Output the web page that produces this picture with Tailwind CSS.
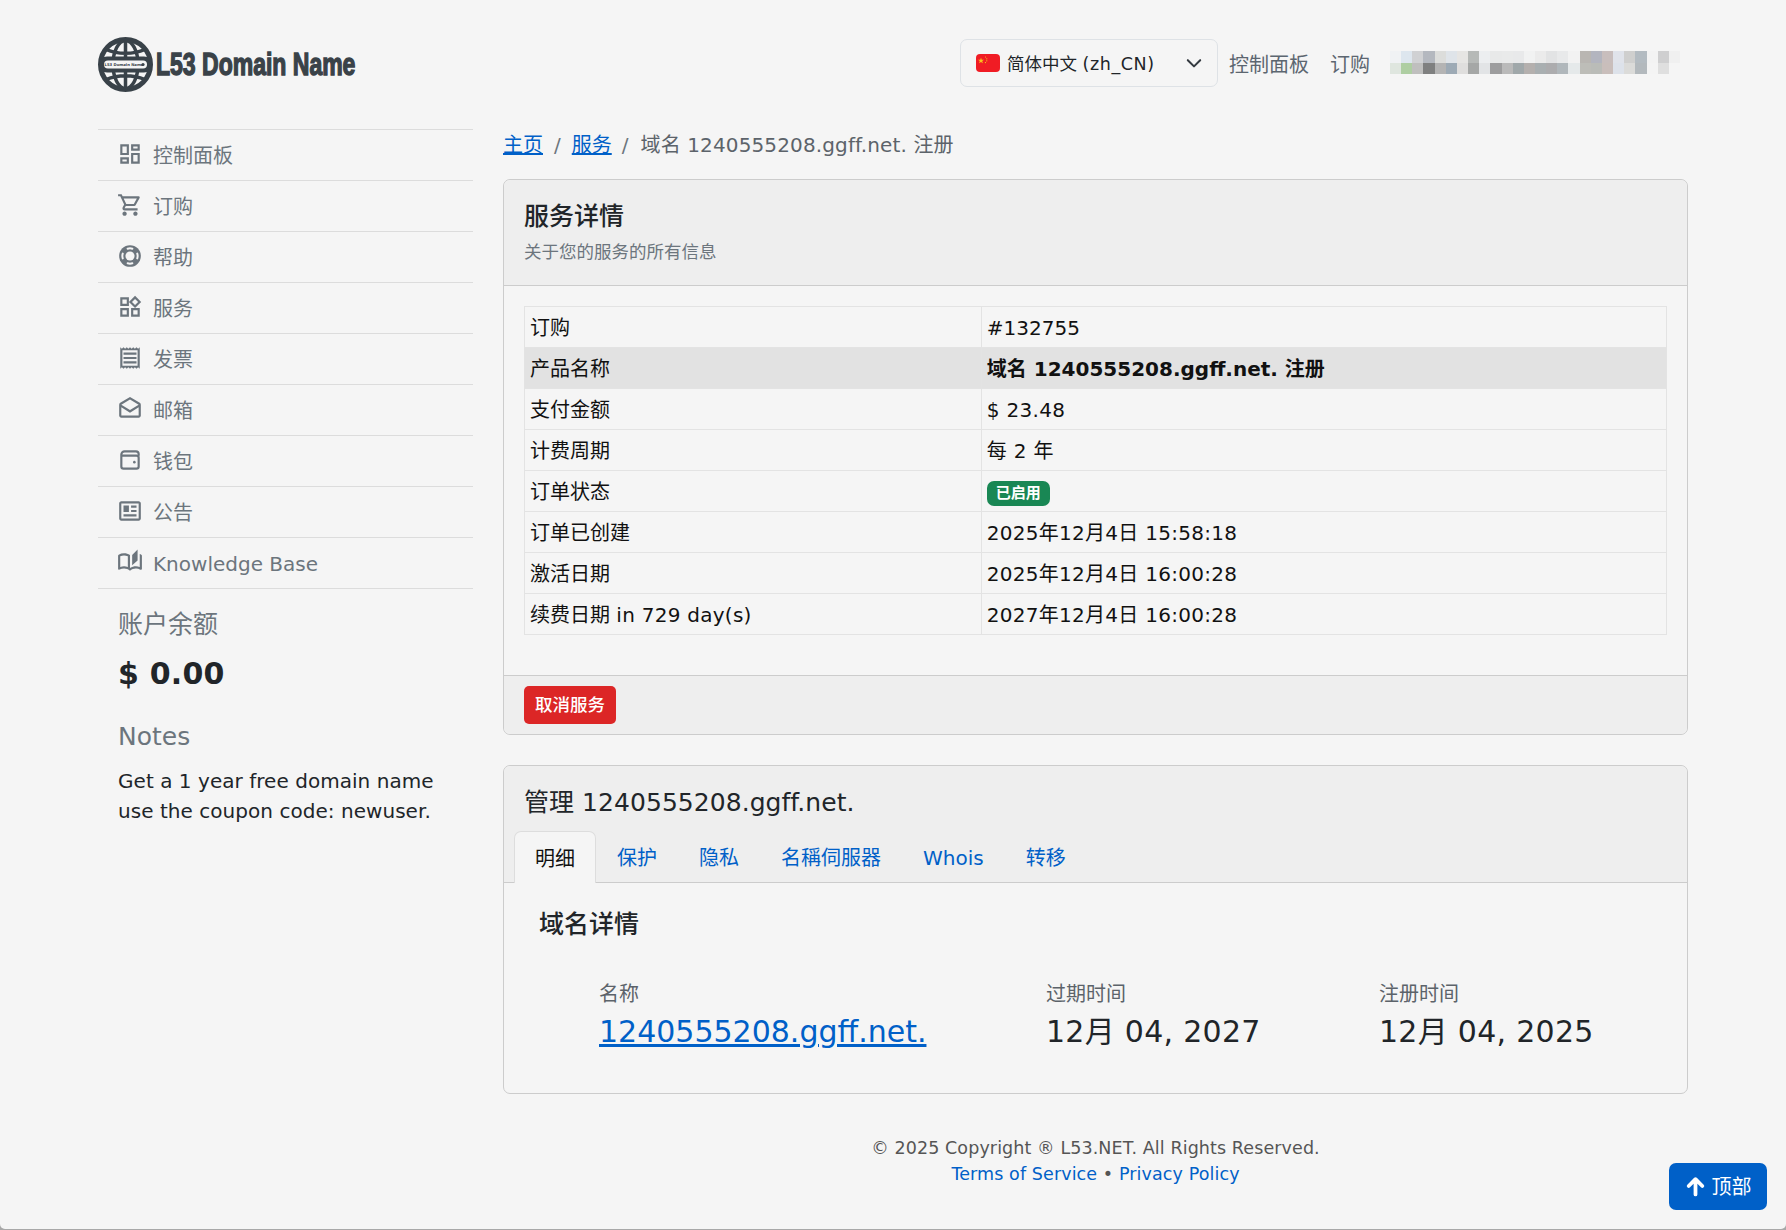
<!DOCTYPE html>
<html lang="zh-CN">
<head>
<meta charset="utf-8">
<title>服务详情</title>
<script src="https://cdn.jsdelivr.net/npm/@tailwindcss/browser@4"></script>
</head>
<body class="bg-[#a8a8a8]">
<div class="relative h-[1229px] overflow-hidden rounded-b-[5px] bg-[#f5f5f5] font-['DejaVu_Sans','Noto_Sans_CJK_SC',sans-serif] text-[20px] leading-[30px] text-[#212529]">
  <div class="w-[1590px] ml-[98px]">
    <header class="flex h-[129px] items-start pt-[37px]">
      <a class="flex items-center gap-[3px]">
        <svg class="w-[55px] h-[55px]" viewBox="0 0 55 55">
          <circle cx="27.5" cy="27.500" r="25" fill="#f5f5f5" stroke="#394249" stroke-width="5"/>
          <ellipse cx="27.5" cy="27.500" rx="12.500" ry="24" fill="none" stroke="#394249" stroke-width="3.500"/>
          <path d="M27.500 3v49M8 12.500c12 5 27 5 39 0M8 42.500c12-5 27-5 39 0" fill="none" stroke="#394249" stroke-width="3.500"/>
          <rect x="1" y="19.500" width="53" height="16" rx="8" fill="#394249"/>
          <rect x="6" y="23.500" width="43" height="8" rx="4" fill="#f5f5f5"/>
          <text x="26" y="29" text-anchor="middle" font-size="3.800" font-weight="700" fill="#394249">L53 Domain Name</text>
          <circle cx="45" cy="27.500" r="1.600" fill="#394249"/>
        </svg>
        <span class="inline-block w-[200px] h-[55px] origin-left scale-x-[0.742] font-['Liberation_Sans',sans-serif] text-[31px] leading-[55px] font-bold whitespace-nowrap text-[#3a4248] [-webkit-text-stroke:1.4px_#3a4248]">L53 Domain Name</span>
      </a>
      <div class="ml-auto flex items-start">
        <div class="flex h-[48px] w-[258px] mt-[2px] ml-[1px] items-center rounded-[7px] border border-[#dee2e6] pl-[15px] text-[17.5px] text-[#212529]">
          <svg class="w-[24px] h-[18px] shrink-0 rounded-[4px]" viewBox="0 0 24 18">
            <rect width="24" height="18" fill="#f01c24"/>
            <polygon points="5,3.500 5.700,5.700 8,5.700 6.200,7 6.900,9.200 5,7.900 3.100,9.200 3.800,7 2,5.700 4.300,5.700" fill="#f8c51c"/>
            <circle cx="9.500" cy="3" r=".6" fill="#f8c51c"/><circle cx="10.800" cy="4.800" r=".6" fill="#f8c51c"/><circle cx="10.800" cy="6.800" r=".6" fill="#f8c51c"/><circle cx="9.500" cy="8.600" r=".6" fill="#f8c51c"/>
          </svg>
          <span class="ml-[7px] pt-[2px] whitespace-nowrap">简体中文 <span class="tracking-[0.6px]">(zh_CN)</span></span>
          <svg class="ml-auto mr-[14px] w-[18px] h-[18px]" viewBox="0 0 16 16" fill="none" stroke="#343a40" stroke-width="1.800" stroke-linecap="round" stroke-linejoin="round"><path d="M2.500 5.500 8 11l5.500-5.500"/></svg>
        </div>
        <a class="ml-[11px] mt-[13px] text-[#5c6670]">控制面板</a>
        <a class="ml-[21px] mt-[13px] text-[#5c6670]">订购</a>
        <div class="ml-[20px] mr-[8px] mt-[14px] grid grid-cols-[repeat(26,11.17px)] auto-rows-[11.5px]">
          <i class="bg-[#f0f2f4]"></i><i class="bg-[#dde6ee]"></i><i class="bg-[#d0d1d3]"></i><i class="bg-[#b4b8bf]"></i><i class="bg-[#dcdddb]"></i><i class="bg-[#dfe4e9]"></i><i class="bg-[#e6e5e3]"></i><i class="bg-[#b6b9b7]"></i><i class="bg-[#eceef0]"></i><i class="bg-[#e8e9e9]"></i><i class="bg-[#e9eaea]"></i><i class="bg-[#e8e9ea]"></i><i class="bg-[#f1f2f2]"></i><i class="bg-[#ebebeb]"></i><i class="bg-[#e2e3e4]"></i><i class="bg-[#e8e9ea]"></i><i class="bg-[#f2f2f2]"></i><i class="bg-[#b9b6b2]"></i><i class="bg-[#b3b5bf]"></i><i class="bg-[#c8bebd]"></i><i class="bg-[#e0e3ea]"></i><i class="bg-[#cfcfce]"></i><i class="bg-[#b3bbc1]"></i><i class="bg-[#f3f3f3]"></i><i class="bg-[#cfcfd0]"></i><i class="bg-[#f0f0f0]"></i>
          <i class="bg-[#dfe6df]"></i><i class="bg-[#aecea2]"></i><i class="bg-[#bfbfbe]"></i><i class="bg-[#7f8080]"></i><i class="bg-[#b4b4b4]"></i><i class="bg-[#9daab5]"></i><i class="bg-[#dfdedd]"></i><i class="bg-[#a5a7a6]"></i><i class="bg-[#e2e4e6]"></i><i class="bg-[#9d9d9e]"></i><i class="bg-[#bababa]"></i><i class="bg-[#a0a8aa]"></i><i class="bg-[#b4b0ae]"></i><i class="bg-[#a9afb1]"></i><i class="bg-[#acacae]"></i><i class="bg-[#b0b7bb]"></i><i class="bg-[#e5e9ea]"></i><i class="bg-[#bdbdb8]"></i><i class="bg-[#babcb8]"></i><i class="bg-[#c9bebb]"></i><i class="bg-[#dde2ea]"></i><i class="bg-[#dbdbd9]"></i><i class="bg-[#b3b9bd]"></i><i class="bg-[#f4f4f4]"></i><i class="bg-[#dfdfdf]"></i><i class="bg-[#f5f5f5]"></i>
        </div>
      </div>
    </header>

    <div class="flex gap-[30px] items-start">
      <aside class="w-[375px] shrink-0">
        <nav class="border-t border-[#dcdcdc] text-[#6c757d]">
          <a class="flex h-[51px] items-center gap-[10px] border-b border-[#dcdcdc] pl-[19px] pt-[2px]"><svg class="w-[26px] h-[26px] -translate-y-[2px]" viewBox="0 0 24 24" fill="#6c757d"><path d="M19 5v2h-4V5h4M9 5v6H5V5h4m10 8v6h-4v-6h4M9 17v2H5v-2h4M21 3h-8v6h8V3zM11 3H3v10h8V3zm10 8h-8v10h8V11zm-10 4H3v6h8v-6z"/></svg>控制面板</a>
          <a class="flex h-[51px] items-center gap-[10px] border-b border-[#dcdcdc] pl-[19px] pt-[2px]"><svg class="w-[26px] h-[26px] -translate-y-[2px]" viewBox="0 0 24 24" fill="#6c757d"><path d="M15.55 13c.75 0 1.41-.41 1.75-1.03l3.58-6.49c.37-.66-.11-1.48-.87-1.48H5.21l-.94-2H1v2h2l3.6 7.59-1.35 2.44C4.52 15.37 5.48 17 7 17h12v-2H7l1.1-2h7.45zM6.16 6h12.15l-2.76 5H8.53L6.16 6zM7 18c-1.1 0-1.99.9-1.99 2S5.9 22 7 22s2-.9 2-2-.9-2-2-2zm10 0c-1.1 0-1.99.9-1.99 2s.89 2 1.99 2 2-.9 2-2-.9-2-2-2z"/></svg>订购</a>
          <a class="flex h-[51px] items-center gap-[10px] border-b border-[#dcdcdc] pl-[19px] pt-[2px]"><svg class="w-[26px] h-[26px] -translate-y-[2px]" viewBox="0 0 24 24"><circle cx="12" cy="12" r="10" fill="#6c757d"/><circle cx="12" cy="12" r="4.200" fill="#f5f5f5"/><path d="M9.800 5.300a7 7 0 0 1 4.400 0M18.700 9.800a7 7 0 0 1 0 4.400M14.200 18.700a7 7 0 0 1-4.400 0M5.300 14.200a7 7 0 0 1 0-4.400" fill="none" stroke="#f5f5f5" stroke-width="1.800" stroke-linecap="round"/></svg>帮助</a>
          <a class="flex h-[51px] items-center gap-[10px] border-b border-[#dcdcdc] pl-[19px] pt-[2px]"><svg class="w-[26px] h-[26px] -translate-y-[2px]" viewBox="0 0 24 24" fill="#6c757d"><path d="M16.66 4.52l2.83 2.83-2.83 2.83-2.83-2.83 2.83-2.83M9 5v4H5V5h4m10 10v4h-4v-4h4M9 15v4H5v-4h4m7.66-13.31L11 7.34 16.66 13l5.66-5.66-5.66-5.65zM11 3H3v8h8V3zm10 10h-8v8h8v-8zm-10 0H3v8h8v-8z"/></svg>服务</a>
          <a class="flex h-[51px] items-center gap-[10px] border-b border-[#dcdcdc] pl-[19px] pt-[2px]"><svg class="w-[26px] h-[26px] -translate-y-[2px]" viewBox="0 0 24 24" fill="#6c757d"><path d="M19.5 3.5 18 2l-1.5 1.5L15 2l-1.5 1.5L12 2l-1.5 1.5L9 2 7.5 3.5 6 2 4.5 3.5 3 2v20l1.5-1.5L6 22l1.5-1.5L9 22l1.5-1.5L12 22l1.5-1.5L15 22l1.5-1.5L18 22l1.5-1.5L21 22V2l-1.5 1.5zM19 19.09H5V4.91h14v14.18zM6 15h12v2H6zm0-4h12v2H6zm0-4h12v2H6z"/></svg>发票</a>
          <a class="flex h-[51px] items-center gap-[10px] border-b border-[#dcdcdc] pl-[19px] pt-[2px]"><svg class="w-[26px] h-[26px] -translate-y-[2px]" viewBox="0 0 24 24" fill="#6c757d"><path d="M21.99 8c0-.72-.37-1.35-.94-1.7L12 1 2.95 6.3C2.38 6.65 2 7.28 2 8v10c0 1.1.9 2 2 2h16c1.1 0 2-.9 2-2l-.01-10zm-2 0v.01L12 13 4 8l8-4.68L19.99 8zM4 18v-7.66l8 5.02 7.99-4.99L20 18H4z"/></svg>邮箱</a>
          <a class="flex h-[51px] items-center gap-[10px] border-b border-[#dcdcdc] pl-[19px] pt-[2px]"><svg class="w-[26px] h-[26px] -translate-y-[2px]" viewBox="0 0 24 24" fill="none" stroke="#6c757d" stroke-width="2"><path d="M20 8V6.500A2.500 2.500 0 0 0 17.500 4H7a3 3 0 0 0-3 3v11a2 2 0 0 0 2 2h12a2 2 0 0 0 2-2v-8a2 2 0 0 0-2-2H4"/><circle cx="16" cy="14" r="1.200" fill="#6c757d" stroke="none"/></svg>钱包</a>
          <a class="flex h-[51px] items-center gap-[10px] border-b border-[#dcdcdc] pl-[19px] pt-[2px]"><svg class="w-[26px] h-[26px] -translate-y-[2px]" viewBox="0 0 24 24" fill="#6c757d"><path d="M20 3H4c-1.100 0-2 .9-2 2v14c0 1.100.9 2 2 2h16c1.100 0 2-.9 2-2V5c0-1.100-.9-2-2-2zm0 16H4V5h16v14z"/><path d="M6 7h5v6H6zM13 7h5v2h-5zM13 11h5v2h-5zM6 15h12v2H6z"/></svg>公告</a>
          <a class="flex h-[51px] items-center gap-[10px] border-b border-[#dcdcdc] pl-[19px] pt-[2px]"><svg class="w-[26px] h-[26px] -translate-y-[2px]" viewBox="0 0 24 24" fill="#6c757d"><path d="M22.470 5.200C22 4.960 21.510 4.760 21 4.590v12.030C19.860 16.210 18.690 16 17.500 16c-1.900 0-3.780.54-5.500 1.580V5.480C10.380 4.550 8.510 4 6.500 4 4.710 4 3.020 4.440 1.530 5.200c-.33.16-.53.51-.53.88v12.080c0 .58.47.99 1 .99.16 0 .32-.04.48-.12C3.690 18.400 5.050 18 6.500 18c2.070 0 3.980.82 5.500 2 1.520-1.180 3.430-2 5.500-2 1.450 0 2.810.4 4.020 1.040.16.08.32.12.48.12.52 0 1-.41 1-.99V6.080c0-.37-.2-.72-.53-.88zM10 16.620C8.860 16.210 7.690 16 6.500 16c-1.190 0-2.360.21-3.500.62V6.710C4.110 6.240 5.280 6 6.500 6c1.200 0 2.390.25 3.500.72v9.900zM19 .5l-5 5V15l5-4.500V.5z"/></svg>Knowledge Base</a>
        </nav>
        <div class="pl-[20px]">
          <h3 class="mt-[21px] text-[25px] leading-[30px] text-[#6c757d]">账户余额</h3>
          <p class="mt-[16px] text-[30px] leading-[36px] font-bold tracking-[0.2px] text-[#212529]">$ 0.00</p>
          <h3 class="mt-[30px] text-[25px] leading-[30px] text-[#6c757d]">Notes</h3>
          <p class="mt-[14px] w-[340px] tracking-[0.04px] text-[#212529]">Get a 1 year free domain name use the coupon code: newuser.</p>
        </div>
      </aside>

      <main class="w-[1185px]">
        <nav class="mt-px mb-[19px] flex h-[30px] items-center text-[#5c636a]">
          <a class="text-[#0060c8] underline">主页</a><span class="mx-[11px] text-[#6c757d]">/</span><a class="text-[#0060c8] underline">服务</a><span class="ml-[10px] mr-[12px] text-[#6c757d]">/</span><span class="tracking-[0.13px]">域名 1240555208.ggff.net. 注册</span>
        </nav>

        <section class="rounded-[7px] border border-[#cccccc] bg-[#f5f5f5]">
          <div class="rounded-t-[7px] border-b border-[#cccccc] bg-[#eeeeee] px-[20px] pt-[22px] pb-[20px]">
            <h2 class="text-[25px] leading-[30px] font-medium text-[#212529]">服务详情</h2>
            <p class="mt-[7px] text-[17.5px] leading-[26px] text-[#6c757d]">关于您的服务的所有信息</p>
          </div>
          <div class="px-[20px] pt-[20px] pb-[40px]">
            <table class="w-full border-collapse text-[#111111]">
              <tbody>
                <tr><td class="w-[40%] border border-[#e3e3e3] px-[5px] pt-[6px] pb-[4px]">订购</td><td class="border border-[#e3e3e3] px-[5px] pt-[6px] pb-[4px]">#132755</td></tr>
                <tr class="bg-[#e2e2e2]"><td class="border border-[#e3e3e3] px-[5px] pt-[6px] pb-[4px]">产品名称</td><td class="border border-[#e3e3e3] px-[5px] pt-[6px] pb-[4px] font-bold">域名 1240555208.ggff.net. 注册</td></tr>
                <tr><td class="border border-[#e3e3e3] px-[5px] pt-[6px] pb-[4px]">支付金额</td><td class="border border-[#e3e3e3] px-[5px] pt-[6px] pb-[4px] tracking-[0.3px]">$ 23.48</td></tr>
                <tr><td class="border border-[#e3e3e3] px-[5px] pt-[6px] pb-[4px]">计费周期</td><td class="border border-[#e3e3e3] px-[5px] pt-[6px] pb-[4px] tracking-[0.3px]">每 2 年</td></tr>
                <tr><td class="border border-[#e3e3e3] px-[5px] pt-[6px] pb-[4px]">订单状态</td><td class="h-[40px] border border-[#e3e3e3] px-[5px] py-0"><span class="flex h-[25px] w-[63px] mt-[4px] items-center justify-center rounded-[7px] bg-[#198754] text-[15px] leading-none font-bold text-white">已启用</span></td></tr>
                <tr><td class="border border-[#e3e3e3] px-[5px] pt-[6px] pb-[4px]">订单已创建</td><td class="border border-[#e3e3e3] px-[5px] pt-[6px] pb-[4px] tracking-[0.27px]">2025年12月4日 15:58:18</td></tr>
                <tr><td class="border border-[#e3e3e3] px-[5px] pt-[6px] pb-[4px]">激活日期</td><td class="border border-[#e3e3e3] px-[5px] pt-[6px] pb-[4px] tracking-[0.27px]">2025年12月4日 16:00:28</td></tr>
                <tr><td class="border border-[#e3e3e3] px-[5px] pt-[6px] pb-[4px]">续费日期 <span class="tracking-[0.26px]">in 729 day(s)</span></td><td class="border border-[#e3e3e3] px-[5px] pt-[6px] pb-[4px] tracking-[0.27px]">2027年12月4日 16:00:28</td></tr>
              </tbody>
            </table>
          </div>
          <div class="rounded-b-[7px] border-t border-[#cccccc] bg-[#eeeeee] px-[20px] py-[10px]">
            <button class="flex h-[38px] w-[92px] items-center justify-center rounded-[5px] bg-[#dc2626] text-[17.5px] font-medium text-white">取消服务</button>
          </div>
        </section>

        <section class="mt-[30px] h-[329px] rounded-[7px] border border-[#cccccc] bg-[#f5f5f5]">
          <div class="rounded-t-[7px] border-b border-[#cccccc] bg-[#eeeeee] pt-[22px]">
            <h2 class="pl-[20px] text-[25px] leading-[30px] tracking-[0.05px] text-[#212529]">管理 1240555208.ggff.net.</h2>
            <div class="mt-[13px] ml-[10px] -mb-px flex text-[#0060c8]">
              <a class="flex h-[52px] items-center rounded-t-[7px] border border-b-0 border-[#dddddd] bg-[#f5f5f5] px-[20px] pt-[2px] text-[#111111]">明细</a>
              <a class="flex h-[52px] items-center px-[21px] pt-[2px]">保护</a>
              <a class="flex h-[52px] items-center px-[21px] pt-[2px]">隐私</a>
              <a class="flex h-[52px] items-center px-[21px] pt-[2px]">名稱伺服器</a>
              <a class="flex h-[52px] items-center px-[21px] pt-[2px]">Whois</a>
              <a class="flex h-[52px] items-center px-[21px] pt-[2px]">转移</a>
            </div>
          </div>
          <div class="pt-[27px] pl-[35px]">
            <h3 class="text-[25px] leading-[30px] font-medium text-[#212529]">域名详情</h3>
            <div class="mt-[39px] grid grid-cols-[447px_333px_1fr] pl-[60px]">
              <div><p class="text-[#5c636a]">名称</p><a class="block text-[30px] leading-[45px] text-[#0060c8] underline">1240555208.ggff.net.</a></div>
              <div><p class="text-[#5c636a]">过期时间</p><p class="text-[30px] leading-[45px] tracking-[0.28px] text-[#212529]">12月 04, 2027</p></div>
              <div><p class="text-[#5c636a]">注册时间</p><p class="text-[30px] leading-[45px] tracking-[0.28px] text-[#212529]">12月 04, 2025</p></div>
            </div>
          </div>
        </section>

        <footer class="mt-[41px] text-center text-[17.5px] leading-[26px] tracking-[0.1px] text-[#555555]">
          <p>© 2025 Copyright ® L53.NET. All Rights Reserved.</p>
          <p><a class="text-[#0060c8]">Terms of Service</a> • <a class="text-[#0060c8]">Privacy Policy</a></p>
        </footer>
      </main>
    </div>
  </div>

  <a class="absolute right-[19px] bottom-[19px] flex h-[47px] w-[98px] items-center justify-center gap-[6px] rounded-[7px] bg-[#0060c8] text-white">
    <svg class="w-[21px] h-[21px]" viewBox="0 0 20 20" fill="none" stroke="white" stroke-width="3.600" stroke-linecap="round" stroke-linejoin="round"><path d="M10 17.500V3.500M3.500 9.500 10 3l6.500 6.500"/></svg>顶部
  </a>
</div>
</body>
</html>
